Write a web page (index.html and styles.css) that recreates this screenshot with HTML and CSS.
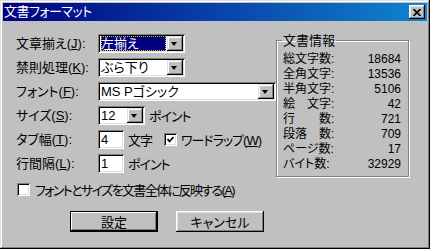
FILE: index.html
```html
<!DOCTYPE html>
<html lang="ja">
<head>
  <meta charset="UTF-8" />
  <title>文書フォーマット</title>
  <link rel="stylesheet" href="styles.css">
</head>
<body>
  <div class="window">
    <div class="titlebar">
      <span class="title">文書フォーマット</span>
      <span class="close">
        <svg width="8" height="7" viewBox="0 0 8 7"><path d="M0.5 0 L7.5 7 M7.5 0 L0.5 7" stroke="#000" stroke-width="1.6" fill="none"/></svg>
      </span>
    </div>

    <div class="body">
      <div class="main">
        <div class="form">
          <span class="lbl">文章揃え(<u>J</u>):</span>
          <div class="combo short">
            <span class="value"><span class="selected">左揃え</span></span>
            <span class="drop"></span>
          </div>

          <span class="lbl">禁則処理(<u>K</u>):</span>
          <div class="combo short">
            <span class="value">ぶら下り</span>
            <span class="drop"></span>
          </div>

          <span class="lbl">フォント(<u>F</u>):</span>
          <div class="combo long">
            <span class="value">MS Pゴシック</span>
            <span class="drop"></span>
          </div>

          <span class="lbl">サイズ(<u>S</u>):</span>
          <div class="line">
            <div class="combo tiny">
              <span class="value">12</span>
              <span class="drop"></span>
            </div>
            <span class="kana">ポイント</span>
          </div>

          <span class="lbl">タブ幅(<u>T</u>):</span>
          <div class="line">
            <span class="field">4</span>
            <span class="kana">文字</span>
            <span class="checkbox wrap-check">
              <svg width="7" height="7" viewBox="0 0 7 7"><path d="M0.5 3 L2.5 5.5 L6.5 1" stroke="#000" stroke-width="1.7" fill="none"/></svg>
            </span>
            <span class="kana">ワードラップ(<u>W</u>)</span>
          </div>

          <span class="lbl">行間隔(<u>L</u>):</span>
          <div class="line">
            <span class="field">1</span>
            <span class="kana">ポイント</span>
          </div>
        </div>

        <fieldset class="info">
          <legend>文書情報</legend>
          <div class="stats">
            <span>総文字数:</span><span>18684</span>
            <span>全角文字:</span><span>13536</span>
            <span>半角文字:</span><span>5106</span>
            <span>絵　文字:</span><span>42</span>
            <span>行　　数:</span><span>721</span>
            <span>段落　数:</span><span>709</span>
            <span>ページ数:</span><span>17</span>
            <span>バイト数:</span><span>32929</span>
          </div>
        </fieldset>
      </div>

      <div class="check-row">
        <span class="checkbox"></span>
        <span class="apply-text">フォントとサイズを文書全体に反映する(<u>A</u>)</span>
      </div>

      <div class="buttons">
        <button class="btn default">設定</button>
        <button class="btn">キャンセル</button>
      </div>
    </div>
  </div>
</body>
</html>
```

FILE: styles.css
```css
* { box-sizing: border-box; }

body {
  margin: 0;
  font-family: "Liberation Sans", "Noto Sans CJK JP", sans-serif;
  font-size: 13px;
  font-feature-settings: "palt";
  color: #000;
  background: #c0c0c0;
}

.window {
  width: 430px;
  height: 249px;
  padding: 3px;
  background: #c0c0c0;
  box-shadow: inset -1px -1px #000, inset 1px 1px #dfdfdf,
              inset -2px -2px #808080, inset 2px 2px #fff;
}

.titlebar {
  height: 18px;
  display: flex;
  align-items: center;
  justify-content: space-between;
  padding: 0 2px 0 1px;
  background: linear-gradient(90deg, #000080, #1084d0);
  color: #fff;
}

.title {
  line-height: 18px;
  letter-spacing: -0.5px;
}

.close {
  width: 16px;
  height: 14px;
  display: flex;
  align-items: center;
  justify-content: center;
  background: #c0c0c0;
  box-shadow: inset -1px -1px #000, inset 1px 1px #fff,
              inset -2px -2px #808080, inset 2px 2px #dfdfdf;
}

.body {
  padding: 13px 0 0 13px;
}

.main {
  display: flex;
  align-items: flex-start;
}

.form {
  width: 260px;
  display: grid;
  grid-template-columns: 82px 1fr;
  row-gap: 5px;
  align-items: center;
}

.lbl {
  line-height: 19px;
  white-space: nowrap;
}

.line {
  display: flex;
  align-items: center;
  gap: 4px;
  white-space: nowrap;
}

.kana {
  letter-spacing: -1px;
}

/* sunken white field */
.combo, .field {
  height: 19px;
  background: #fff;
  box-shadow: inset 1px 1px #808080, inset -1px -1px #fff,
              inset 2px 2px #000, inset -2px -2px #dfdfdf;
}

.combo {
  display: flex;
  align-items: center;
  padding: 2px;
}

.combo.short { width: 87px; }
.combo.long  { width: 178px; }
.combo.tiny  { width: 47px; }

.value {
  flex: 1;
  padding-left: 1px;
  line-height: 15px;
  white-space: nowrap;
  overflow: hidden;
}

.selected {
  display: block;
  margin-right: 1px;
  background: #000080;
  color: #fff;
  outline: 1px dotted #c8c800;
  outline-offset: -1px;
}

.drop {
  width: 16px;
  height: 15px;
  position: relative;
  background: #c0c0c0;
  box-shadow: inset -1px -1px #000, inset 1px 1px #dfdfdf,
              inset -2px -2px #808080, inset 2px 2px #fff;
}

.drop::after {
  content: "";
  position: absolute;
  left: 4px;
  top: 6px;
  border-left: 3.5px solid transparent;
  border-right: 3.5px solid transparent;
  border-top: 4px solid #000;
}

.field {
  width: 26px;
  padding: 0 3px;
  line-height: 19px;
}

.checkbox {
  width: 13px;
  height: 13px;
  flex: none;
  display: inline-flex;
  align-items: center;
  justify-content: center;
  background: #fff;
  box-shadow: inset 1px 1px #808080, inset -1px -1px #fff,
              inset 2px 2px #000, inset -2px -2px #dfdfdf;
}

.wrap-check {
  margin-left: 8px;
}

.info {
  width: 133px;
  margin: -1px 0 0 0;
  padding: 4px 6px 4px 6px;
  border: 1px solid #808080;
  box-shadow: inset 1px 1px #fff, 1px 1px #fff;
  min-inline-size: 0;
  font-size: 12px;
}

.info legend {
  padding: 0 1px;
  margin-left: -1px;
  line-height: 15px;
  font-size: 13px;
}

.stats {
  display: grid;
  grid-template-columns: 1fr auto;
  line-height: 15px;
  padding-right: 1px;
}

.stats span:nth-child(even) {
  text-align: right;
}

.check-row {
  display: flex;
  align-items: center;
  gap: 5px;
  height: 15px;
  margin-top: 5px;
  padding-left: 1px;
  white-space: nowrap;
}

.apply-text {
  letter-spacing: -1.6px;
}

.buttons {
  display: flex;
  gap: 18px;
  margin-top: 14px;
  padding-left: 54px;
}

.btn {
  width: 88px;
  height: 21px;
  padding: 0;
  border: none;
  background: #c0c0c0;
  font: inherit;
  color: #000;
  box-shadow: inset -1px -1px #000, inset 1px 1px #fff,
              inset -2px -2px #808080, inset 2px 2px #dfdfdf;
}

.btn.default {
  box-shadow: inset 0 0 0 1px #000, inset -2px -2px #000, inset 2px 2px #fff,
              inset -3px -3px #808080;
}
```
